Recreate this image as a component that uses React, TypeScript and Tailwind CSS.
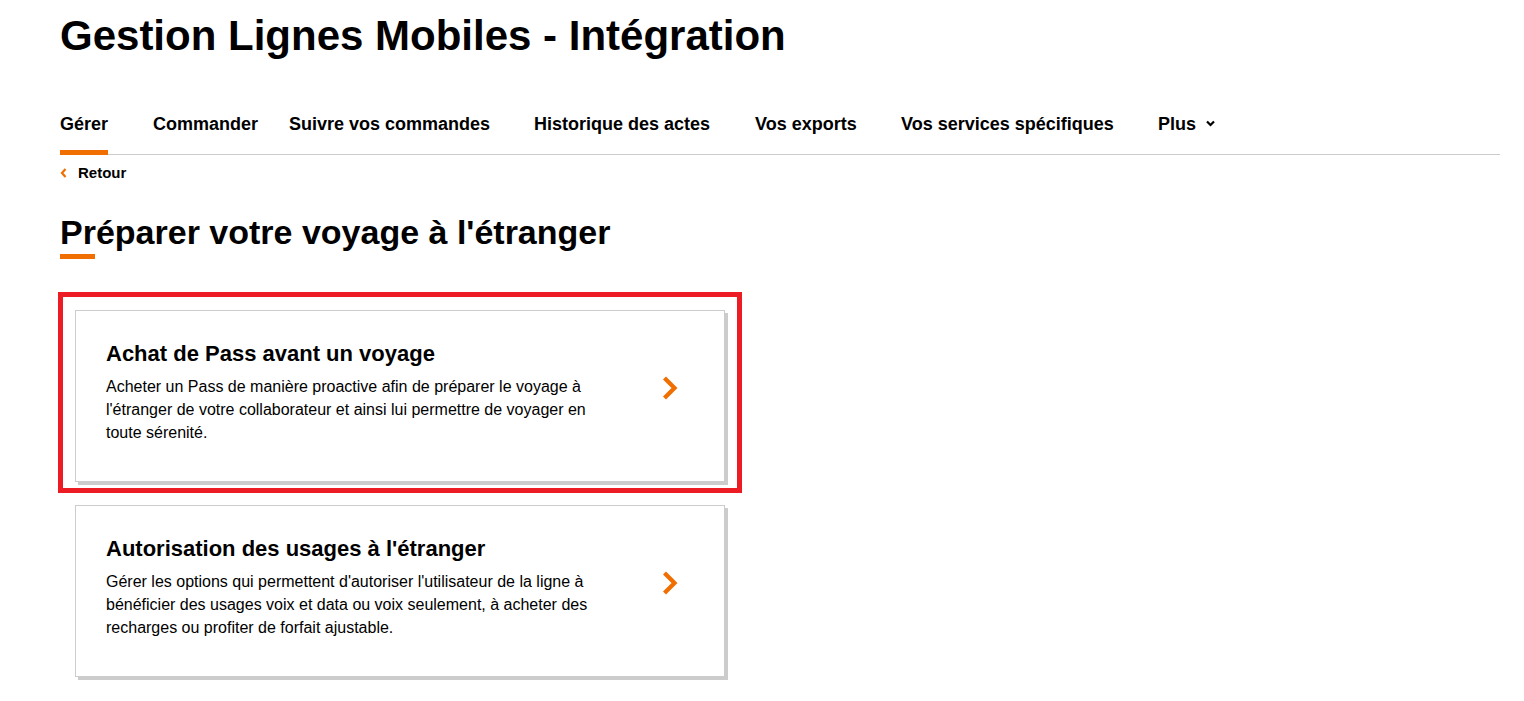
const navItems = [
  { label: 'Gérer', width: 'w-[93px]', active: true },
  { label: 'Commander', width: 'w-[136px]' },
  { label: 'Suivre vos commandes', width: 'w-[245px]' },
  { label: 'Historique des actes', width: 'w-[221px]' },
  { label: 'Vos exports', width: 'w-[146px]' },
  { label: 'Vos services spécifiques', width: 'w-[257px]' },
]

function ChevronRight() {
  return (
    <svg width="16" height="24" viewBox="0 0 16 24" className="shrink-0">
      <path d="M2.5 2 L12.5 12 L2.5 22" fill="none" stroke="#f16e00" strokeWidth="4.2" strokeLinejoin="miter" />
    </svg>
  )
}

function Card({ title, text }: { title: string; text: string }) {
  return (
    <div className="flex w-[650px] border border-[#ccc] bg-white pl-[30px] pt-[29px] pb-[37px] shadow-[3px_3px_0_#ccc]">
      <div className="w-[500px]">
        <h3 className="text-[22px] leading-[28px] font-bold">{title}</h3>
        <p className="mt-[7px] text-[16px] leading-[23px]">{text}</p>
      </div>
      <div className="ml-auto mr-[46px] mt-[36px] self-start">
        <ChevronRight />
      </div>
    </div>
  )
}

export default function App() {
  return (
    <div className="min-h-screen bg-white pl-[60px] pr-[24px] text-black font-['Liberation_Sans',Arial,sans-serif]">
      <h1 className="pt-[12px] text-[42px] leading-[48px] font-bold">Gestion Lignes Mobiles - Intégration</h1>

      {/* Main nav */}
      <nav className="mt-[52px] flex border-b border-[#ccc]">
        {navItems.map((item) => (
          <div key={item.label} className={`${item.width} shrink-0`}>
            <span
              className={`inline-block text-[18px] leading-[24px] font-bold ${
                item.active ? '-mb-px border-b-[5px] border-[#f16e00] pb-[14px]' : 'pb-[14px]'
              }`}
            >
              {item.label}
            </span>
          </div>
        ))}
        <div className="flex items-start">
          <span className="text-[18px] leading-[24px] font-bold">Plus</span>
          <svg width="9" height="7" viewBox="0 0 9 7" className="ml-[10px] mt-[8px]">
            <path d="M1 1.5 L4.5 5 L8 1.5" fill="none" stroke="#000" strokeWidth="2.2" />
          </svg>
        </div>
      </nav>

      {/* Back link */}
      <div className="mt-[8px] flex items-center">
        <svg width="7" height="10" viewBox="0 0 7 10" className="shrink-0">
          <path d="M5.5 1 L2 5 L5.5 9" fill="none" stroke="#f16e00" strokeWidth="2.2" />
        </svg>
        <span className="ml-[11px] text-[15px] leading-[20px] font-bold">Retour</span>
      </div>

      <h2 className="mt-[29px] text-[34px] leading-[40px] font-bold">Préparer votre voyage à l'étranger</h2>
      <div className="mt-[2px] h-[5px] w-[35px] bg-[#f16e00]" />

      <div className="-ml-[2px] mt-[33px] w-[684px] border-[5px] border-[#ed1c24] pl-[12px] pt-[13px] pb-[6px]">
        <Card
          title="Achat de Pass avant un voyage"
          text="Acheter un Pass de manière proactive afin de préparer le voyage à l'étranger de votre collaborateur et ainsi lui permettre de voyager en toute sérenité."
        />
      </div>

      <div className="ml-[15px] mt-[12px] pb-[24px]">
        <Card
          title="Autorisation des usages à l'étranger"
          text="Gérer les options qui permettent d'autoriser l'utilisateur de la ligne à bénéficier des usages voix et data ou voix seulement, à acheter des recharges ou profiter de forfait ajustable."
        />
      </div>
    </div>
  )
}
